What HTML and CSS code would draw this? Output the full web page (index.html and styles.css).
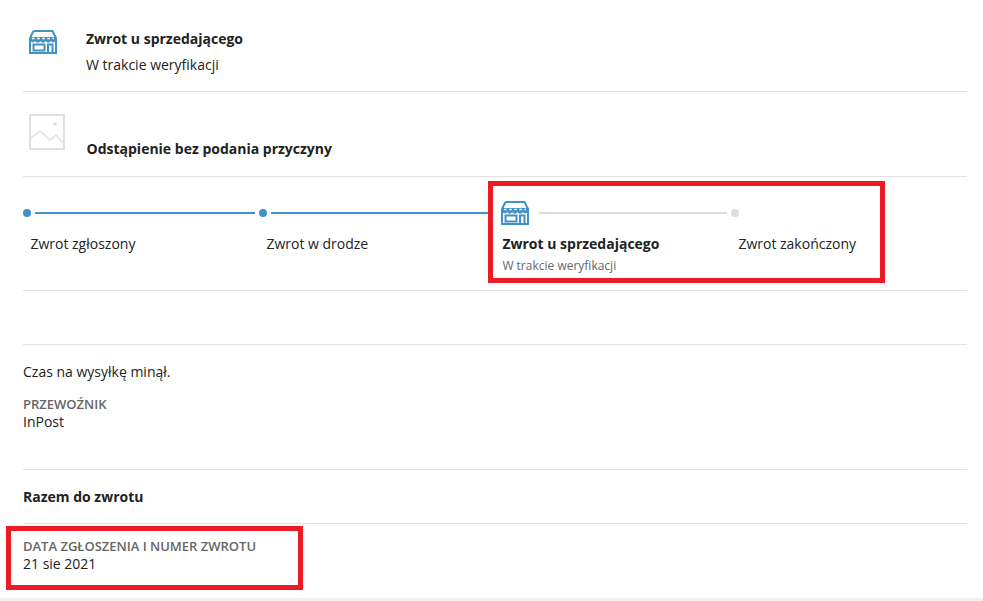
FILE: index.html
```html
<!DOCTYPE html>
<html lang="pl">
<head>
    <meta charset="UTF-8">
    <meta name="viewport" content="width=device-width, initial-scale=1.0">
    <title>Zwrot</title>
    <link rel="stylesheet" href="styles.css">
</head>
<body>
    <svg class="icon-defs" width="0" height="0">
        <symbol id="store" viewBox="0 0 28 24">
            <path d="M4.500 1h19L27 8v16M1 24V8z" fill="none" stroke="#4191c7" stroke-width="2"/>
            <path d="M1 8L4.500 1M0 23h28v1H0z" fill="none" stroke="#4191c7" stroke-width="2"/>
            <path d="M1 7h26v3a2.800 2.800 0 0 1-5.200 1 2.800 2.800 0 0 1-5.200 0 2.800 2.800 0 0 1-5.200 0 2.800 2.800 0 0 1-5.200 0A2.800 2.800 0 0 1 1 10z" fill="#4191c7"/>
            <path d="M3 8.500h2.500M8.200 8.500h2.500M13.300 8.500h2.500M18.400 8.500h2.500M23.500 8.500H25" stroke="#fff" stroke-width="1.400"/>
            <path d="M4.500 14.500h11v6h-11zM19 24v-9.500h4.500V24" fill="none" stroke="#4191c7" stroke-width="2"/>
        </symbol>
    </svg>

    <div class="container">
        <!-- Status zwrotu -->
        <div class="row row-status">
            <svg class="store-icon"><use href="#store"/></svg>
            <div class="row-text">
                <div class="title">Zwrot u sprzedającego</div>
                <div class="subtitle">W trakcie weryfikacji</div>
            </div>
        </div>

        <!-- Produkt -->
        <div class="row row-product">
            <svg class="placeholder" viewBox="0 0 36 36">
                <rect x="1" y="1" width="34" height="34" fill="none" stroke="#e0e0e0" stroke-width="2"/>
                <path d="M2 24l9-7 10 9 6-5 7 8" fill="none" stroke="#e0e0e0" stroke-width="1.500"/>
                <circle cx="26" cy="10" r="1.800" fill="#e0e0e0"/>
            </svg>
            <div class="title">Odstąpienie bez podania przyczyny</div>
        </div>

        <!-- Kroki -->
        <div class="steps">
            <div class="step">
                <div class="step-head">
                    <span class="dot"></span>
                    <span class="line"></span>
                </div>
                <div class="step-label">Zwrot zgłoszony</div>
            </div>
            <div class="step">
                <div class="step-head">
                    <span class="dot"></span>
                    <span class="line"></span>
                </div>
                <div class="step-label">Zwrot w drodze</div>
            </div>
            <div class="step">
                <div class="step-head">
                    <svg class="step-icon"><use href="#store"/></svg>
                    <span class="line line-todo"></span>
                </div>
                <div class="step-label step-label-active">Zwrot u sprzedającego</div>
                <div class="step-note">W trakcie weryfikacji</div>
            </div>
            <div class="step">
                <div class="step-head">
                    <span class="dot dot-todo"></span>
                </div>
                <div class="step-label">Zwrot zakończony</div>
            </div>
        </div>

        <div class="spacer"></div>

        <!-- Wysylka -->
        <div class="shipping">
            <p class="shipping-msg">Czas na wysyłkę minął.</p>
            <div class="label">Przewoźnik</div>
            <div class="value">InPost</div>
        </div>

        <div class="total">Razem do zwrotu</div>

        <div class="date">
            <div class="label">Data zgłoszenia i numer zwrotu</div>
            <div class="value">21 sie 2021</div>
        </div>
    </div>

    <div class="footer-band"></div>

    <div class="mark mark-steps"></div>
    <div class="mark mark-date"></div>
</body>
</html>
```

FILE: styles.css
```css
html, body {
    height: 100%;
}

body {
    font-family: "Open Sans", Arial, sans-serif;
    font-size: 14px;
    line-height: 20px;
    color: #222;
    background-color: #fff;
    margin: 0;
    padding: 0;
    position: relative;
    overflow: hidden;
}

.icon-defs {
    display: block;
    height: 0;
}

.container {
    margin: 0 16px 0 23px;
    height: 598px;
}

.row {
    border-bottom: 1px solid #e0e0e0;
    display: flex;
    box-sizing: border-box;
}

.row-status {
    height: 92px;
    padding: 30px 0 0 6px;
}

.store-icon {
    width: 28px;
    height: 24px;
    flex: none;
}

.row-text {
    margin-left: 29px;
    margin-top: -1px;
}

.title {
    font-weight: 700;
}

.subtitle {
    margin-top: 6px;
}

.row-product {
    height: 85px;
    padding: 22px 0 0 6px;
}

.placeholder {
    width: 36px;
    height: 36px;
    flex: none;
}

.row-product .title {
    margin-left: 21.500px;
    margin-top: 25px;
}

.steps {
    display: grid;
    grid-template-columns: repeat(4, 236px);
    height: 114px;
    box-sizing: border-box;
    border-bottom: 1px solid #e0e0e0;
    padding-top: 24px;
}

.step-head {
    display: flex;
    align-items: center;
    height: 24px;
}

.dot {
    width: 8px;
    height: 8px;
    border-radius: 50%;
    background-color: #4191c7;
    flex: none;
}

.dot-todo {
    background-color: #ddd;
}

.line {
    flex: 1;
    height: 2px;
    margin: 0 4px;
    background-color: #4191c7;
}

.line-todo {
    background-color: #ddd;
    margin-left: 10px;
}

.step-icon {
    width: 28px;
    height: 24px;
    margin-left: 6px;
    flex: none;
}

.step-label {
    margin: 9px 0 0 7.400px;
}

.step-label-active {
    font-weight: 700;
}

.step-note {
    margin: 2px 0 0 7.400px;
    font-size: 12px;
    color: #666;
}

.spacer {
    height: 53px;
    border-bottom: 1px solid #e0e0e0;
}

.shipping {
    height: 124px;
    border-bottom: 1px solid #e0e0e0;
}

.shipping-msg {
    margin: 0;
    padding-top: 17px;
}

.label {
    font-size: 13px;
    line-height: 16px;
    font-weight: 600;
    color: #666;
    text-transform: uppercase;
}

.shipping .label {
    margin-top: 14px;
}

.value {
    margin-top: 1px;
    line-height: 18px;
}

.total {
    height: 53px;
    line-height: 54px;
    font-weight: 700;
    border-bottom: 1px solid #e0e0e0;
}

.date {
    padding-top: 14px;
}

.footer-band {
    height: 3px;
    background-color: #eef0f2;
}

/* ramki zaznaczenia na screenshocie */
.mark {
    position: absolute;
    border: 5px solid #ed1c24;
    box-sizing: border-box;
}

.mark-steps {
    left: 488px;
    top: 181px;
    width: 397px;
    height: 102px;
}

.mark-date {
    left: 6px;
    top: 526px;
    width: 297px;
    height: 64px;
}
```
